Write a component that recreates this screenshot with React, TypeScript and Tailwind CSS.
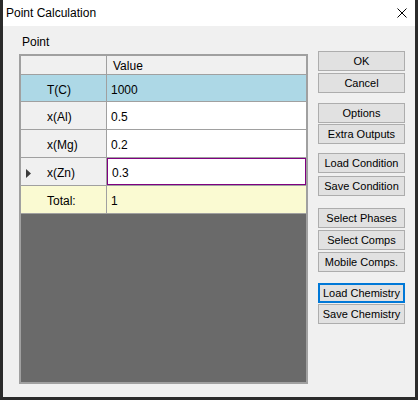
import React from 'react';

type Row = {
  name: string;
  value: string;
  kind: 'active' | 'plain' | 'edit' | 'total';
  h: string;
};

const rows: Row[] = [
  { name: 'T(C)', value: '1000', kind: 'active', h: 'h-[27px]' },
  { name: 'x(Al)', value: '0.5', kind: 'plain', h: 'h-[28px]' },
  { name: 'x(Mg)', value: '0.2', kind: 'plain', h: 'h-[28px]' },
  { name: 'x(Zn)', value: '0.3', kind: 'edit', h: 'h-[28px]' },
  { name: 'Total:', value: '1', kind: 'total', h: 'h-[28px]' },
];

const buttons = [
  { label: 'OK', mt: 'mt-[25px]' },
  { label: 'Cancel', mt: 'mt-[2px]' },
  { label: 'Options', mt: 'mt-[10px]' },
  { label: 'Extra Outputs', mt: 'mt-[1px]' },
  { label: 'Load Condition', mt: 'mt-[9px]' },
  { label: 'Save Condition', mt: 'mt-[3px]' },
  { label: 'Select Phases', mt: 'mt-[12px]' },
  { label: 'Select Comps', mt: 'mt-[2px]' },
  { label: 'Mobile Comps.', mt: 'mt-[2px]' },
  { label: 'Load Chemistry', mt: 'mt-[11px]', focused: true },
  { label: 'Save Chemistry', mt: 'mt-[1px]' },
];

function GridRow({ row }: { row: Row }) {
  const headBg =
    row.kind === 'active'
      ? 'bg-[#add8e6]'
      : row.kind === 'total'
        ? 'bg-[#fafad2]'
        : 'bg-[#f0f0f0]';
  const cellBg =
    row.kind === 'active'
      ? 'bg-[#add8e6]'
      : row.kind === 'total'
        ? 'bg-[#fafad2]'
        : 'bg-white';

  return (
    <div className={`flex ${row.h} border-b border-[#a0a0a0]`}>
      <div className={`w-[86px] flex items-center pt-[3px] border-r border-[#a0a0a0] ${headBg}`}>
        <div className="w-[26px] flex items-center pl-[5px]">
          {row.kind === 'edit' && (
            <svg width="5" height="9" viewBox="0 0 5 9">
              <path d="M0 0 L5 4.5 L0 9 Z" fill="#3c3c3c" />
            </svg>
          )}
        </div>
        <span>{row.name}</span>
      </div>
      <div
        className={`flex-1 flex items-center pl-[4px] pt-[3px] ${cellBg} ${
          row.kind === 'edit' ? 'border border-[#800080]' : ''
        }`}
      >
        {row.value}
      </div>
    </div>
  );
}

export default function App() {
  return (
    <div className="w-[418px] h-[400px] bg-[#2b2b2b] px-[3px] pb-[3px] flex flex-col font-['Liberation_Sans',Arial,sans-serif] text-black">
      <div className="h-[26px] bg-white flex items-center justify-between pl-[3px] pr-[8px] shrink-0">
        <span className="text-[12px] leading-[14px]">Point Calculation</span>
        <svg width="10" height="10" viewBox="0 0 10 10">
          <path d="M0.5 0.5 L9.5 9.5 M9.5 0.5 L0.5 9.5" stroke="#000" strokeWidth="1" />
        </svg>
      </div>

      <div className="flex-1 bg-[#f0f0f0] flex">
        <div className="pl-[16px] flex flex-col">
          <div className="pt-[9px] pl-[3px] mb-[5px] text-[12px] leading-[14px]">Point</div>
          <div className="w-[289px] h-[330px] border-2 border-[#a0a0a0] bg-[#6a6a6a] flex flex-col text-[12px] leading-[14px]">
            <div className="flex h-[19px] border-b border-[#a0a0a0] bg-[#f0f0f0]">
              <div className="w-[86px] border-r border-[#a0a0a0]" />
              <div className="flex-1 flex items-center pl-[6px] pt-[2px]">Value</div>
            </div>
            {rows.map((r) => (
              <GridRow key={r.name} row={r} />
            ))}
          </div>
        </div>

        <div className="ml-[10px] flex flex-col">
          {buttons.map((b) => (
            <button
              key={b.label}
              className={`${b.mt} w-[87px] h-[20px] bg-[#e1e1e1] text-[11px] leading-[13px] flex items-center justify-center ${
                b.focused ? 'border-2 border-[#0078d7]' : 'border border-[#adadad]'
              }`}
            >
              {b.label}
            </button>
          ))}
        </div>
      </div>
    </div>
  );
}
